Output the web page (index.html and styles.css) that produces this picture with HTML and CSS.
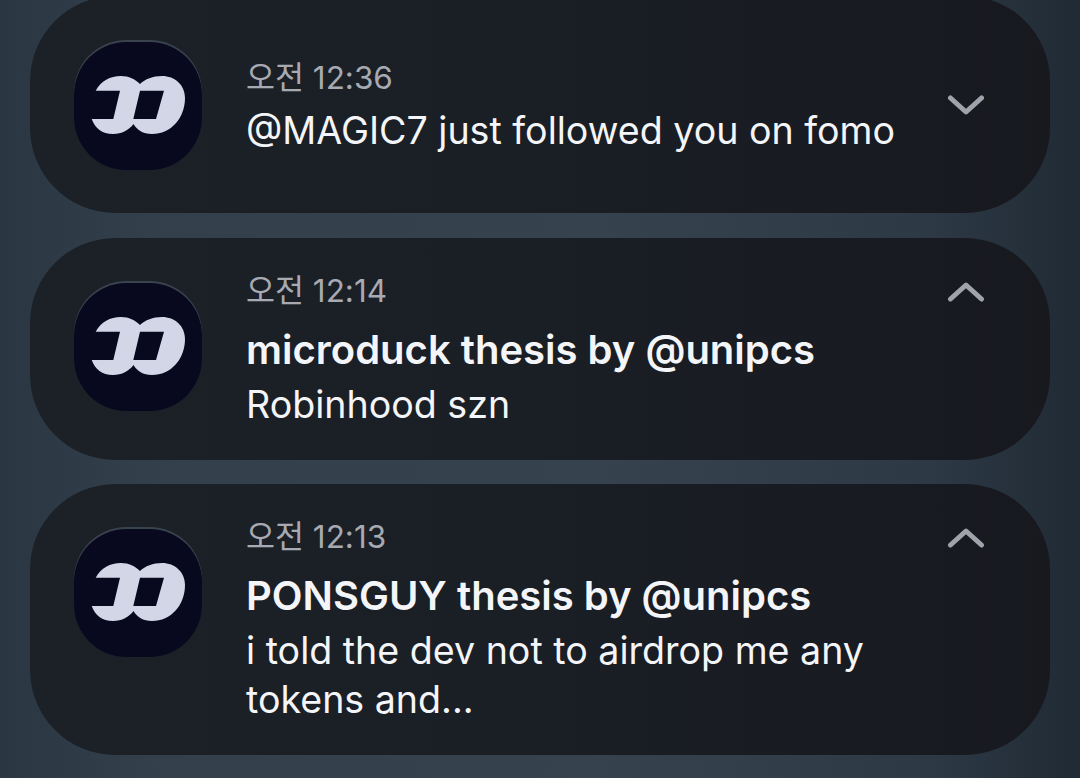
FILE: index.html
```html
<!DOCTYPE html>
<html lang="en">
<head>
    <meta charset="UTF-8">
    <title>Notifications</title>
    <link rel="stylesheet" href="styles.css">
</head>
<body>
    <main class="stack">
        <article class="notice notice-first">
            <div class="app-icon">
                <svg viewBox="1 2 105 70" width="105" height="70"><path class="mark" fill-rule="evenodd" d="M10.7 21.7C16 12 25 7 36 7C44 7 50 10 55 15C60 10 68 7 77 7C90 7 100 16 100 29C100 49 86 65 67 65C58 65 52 61 48.5 55C44 61 37 65 28 65C17 65 10 59 6.7 50H28.3L35 21.7ZM55 21.7L48.3 50H71L79 21.7Z"/></svg>
            </div>
            <div class="body">
                <div class="time">오전 12:36</div>
                <p class="line">@MAGIC7 just followed you on fomo</p>
            </div>
            <svg class="chevron" viewBox="0 0 38 20" width="38" height="20"><path d="M3.5 3L19 17L34.5 3"/></svg>
        </article>
        <article class="notice">
            <div class="app-icon">
                <svg viewBox="1 2 105 70" width="105" height="70"><path class="mark" fill-rule="evenodd" d="M10.7 21.7C16 12 25 7 36 7C44 7 50 10 55 15C60 10 68 7 77 7C90 7 100 16 100 29C100 49 86 65 67 65C58 65 52 61 48.5 55C44 61 37 65 28 65C17 65 10 59 6.7 50H28.3L35 21.7ZM55 21.7L48.3 50H71L79 21.7Z"/></svg>
            </div>
            <div class="body">
                <div class="time">오전 12:14</div>
                <h2 class="title">microduck thesis by @unipcs</h2>
                <p class="line">Robinhood szn</p>
            </div>
            <svg class="chevron" viewBox="0 0 38 20" width="38" height="20"><path d="M3.5 17L19 3L34.5 17"/></svg>
        </article>
        <article class="notice">
            <div class="app-icon">
                <svg viewBox="1 2 105 70" width="105" height="70"><path class="mark" fill-rule="evenodd" d="M10.7 21.7C16 12 25 7 36 7C44 7 50 10 55 15C60 10 68 7 77 7C90 7 100 16 100 29C100 49 86 65 67 65C58 65 52 61 48.5 55C44 61 37 65 28 65C17 65 10 59 6.7 50H28.3L35 21.7ZM55 21.7L48.3 50H71L79 21.7Z"/></svg>
            </div>
            <div class="body">
                <div class="time">오전 12:13</div>
                <h2 class="title">PONSGUY thesis by @unipcs</h2>
                <p class="line">i told the dev not to airdrop me any<br>tokens and...</p>
            </div>
            <svg class="chevron" viewBox="0 0 38 20" width="38" height="20"><path d="M3.5 17L19 3L34.5 17"/></svg>
        </article>
    </main>
</body>
</html>
```

FILE: styles.css
```css
/* Page */
html, body {
    height: 100%;
}

body {
    margin: 0;
    overflow: hidden;
    font-family: 'Inter', 'Noto Sans CJK KR', sans-serif;
    background: linear-gradient(90deg, #2a3641 0%, #33404c 14%, #36434f 55%, #2d3945 86%, #1f2a34 100%);
}

/* Cards */
.stack {
    display: flex;
    flex-direction: column;
    gap: 24px;
    padding: 0 30px;
    margin-top: -4px;
}

.notice {
    display: flex;
    align-items: flex-start;
    padding: 35px 65px 31px 44px;
    background: linear-gradient(90deg, #1c2128 0%, #1a1e25 50%, #17191f 100%);
    border-radius: 85px;
}

.notice-first {
    margin-bottom: 1px;
    padding-bottom: 43px;
}

/* App icon */
.app-icon {
    flex: none;
    display: flex;
    align-items: center;
    justify-content: center;
    width: 128px;
    height: 128px;
    margin-top: 10px;
    background: #08081e;
    box-shadow: 0 -2px 0 #39434e;
    border-radius: 41%;
}

.notice-first .app-icon {
    margin-top: 11px;
}

.mark {
    fill: #d3d6e6;
}

/* Text */
.body {
    flex: 1;
    margin-left: 44px;
}

.notice-first .body {
    padding-top: 29px;
}

.time {
    font-size: 31.5px;
    line-height: 36px;
    color: #a7aab2;
}

.title {
    margin: 17px 0 0;
    font-size: 40px;
    line-height: 48px;
    font-weight: 600;
    color: #f4f5f8;
}

.line {
    margin: 6px 0 0;
    font-size: 37.6px;
    line-height: 49px;
    color: #f4f5f8;
}

.notice-first .line {
    margin-top: 10px;
}

/* Chevron */
.chevron {
    flex: none;
    margin-top: 9px;
    fill: none;
    stroke: #a0a3ab;
    stroke-width: 5;
    stroke-linecap: round;
    stroke-linejoin: round;
}

.notice-first .chevron {
    margin-top: 64px;
}
```
